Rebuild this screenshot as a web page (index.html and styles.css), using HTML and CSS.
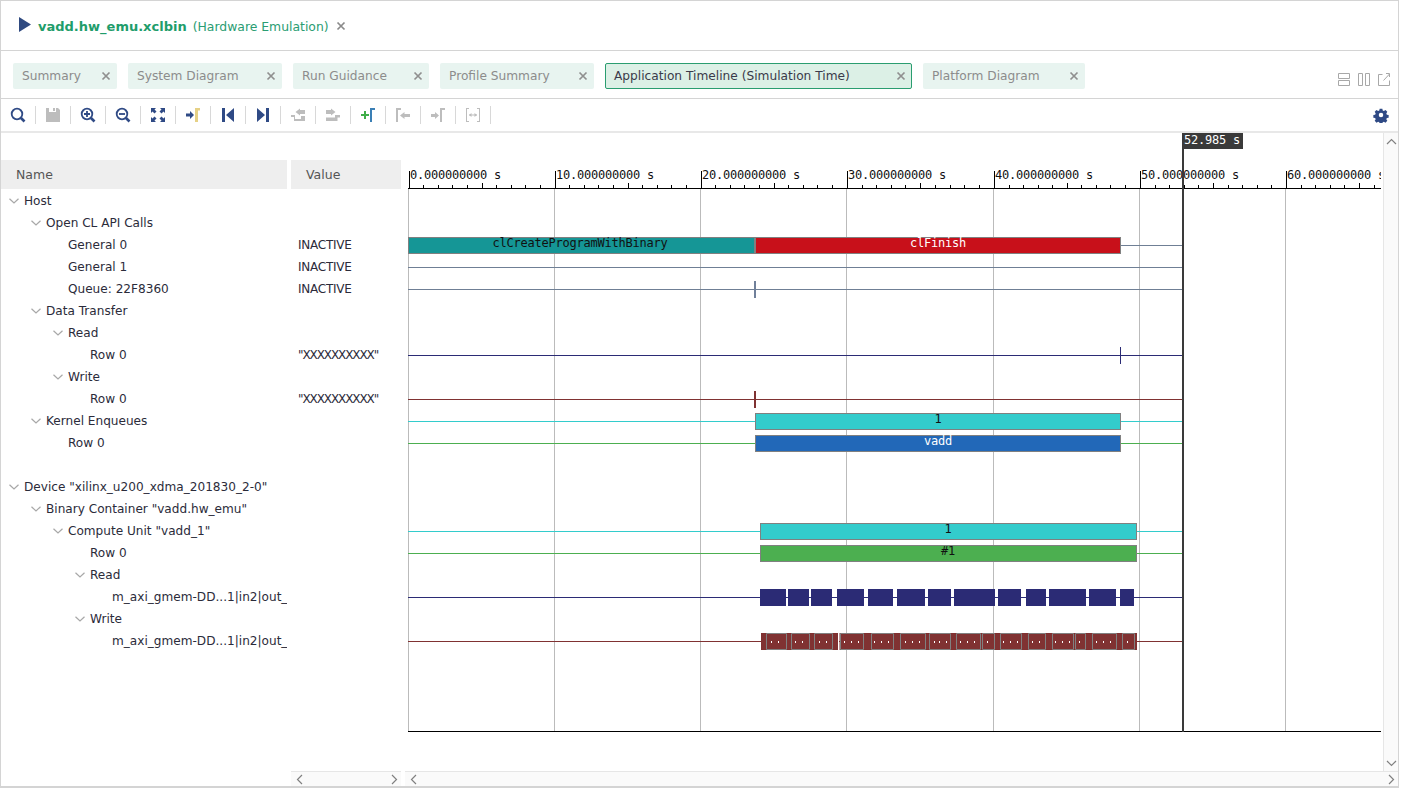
FILE: index.html
```html
<!DOCTYPE html>
<html lang="en">
<head>
<meta charset="utf-8">
<title>Application Timeline</title>
<link rel="stylesheet" href="styles.css">
</head>
<body>
<svg class="defs" width="0" height="0" aria-hidden="true">
  <symbol id="x" viewBox="0 0 10 10"><path d="M1.500 1.500l7 7M8.500 1.500l-7 7" fill="none" stroke="currentColor" stroke-width="1.700"/></symbol>
  <symbol id="chev" viewBox="0 0 10 6"><path d="M.5.7L5 5l4.500-4.300" fill="none" stroke="#a8a8a8" stroke-width="1.200"/></symbol>
</svg>
<div class="app">
  <header class="title">
    <svg class="play" width="12" height="15" viewBox="0 0 12 15"><path d="M0 0l12 7.500L0 15z"/></svg>
    <span class="file">vadd.hw_emu.xclbin</span>
    <span class="mode">(Hardware Emulation)</span>
    <svg class="tx" width="10" height="10"><use href="#x"/></svg>
  </header>

  <nav class="tabs">
    <div class="tab w104">Summary<svg class="cx" width="10" height="10"><use href="#x"/></svg></div>
    <div class="tab w154">System Diagram<svg class="cx" width="10" height="10"><use href="#x"/></svg></div>
    <div class="tab w136">Run Guidance<svg class="cx" width="10" height="10"><use href="#x"/></svg></div>
    <div class="tab w154">Profile Summary<svg class="cx" width="10" height="10"><use href="#x"/></svg></div>
    <div class="tab active w307">Application Timeline (Simulation Time)<svg class="cx" width="10" height="10"><use href="#x"/></svg></div>
    <div class="tab w162">Platform Diagram<svg class="cx" width="10" height="10"><use href="#x"/></svg></div>
    <div class="views">
      <svg width="12" height="13" viewBox="0 0 12 13"><path d="M.5.5h11v5H.5zM.5 7.500h11v5H.5z"/></svg>
      <svg width="12" height="13" viewBox="0 0 12 13"><path d="M.5.5h4v12h-4zM7.500.5h4v12h-4z"/></svg>
      <svg width="12" height="13" viewBox="0 0 12 13"><path d="M4.500 1.500h-4v11h11v-5M5.500 7.500l6-6.500M8 .5h3.500V4"/></svg>
    </div>
  </nav>

  <div class="toolbar">
    <div class="tool"><svg width="16" height="16" viewBox="0 0 16 16"><circle cx="7" cy="7" r="5.300" class="ring"/><path class="ring thick" d="M11 11l3.500 3.500"/></svg></div>
    <div class="tool"><svg width="16" height="16" viewBox="0 0 16 16"><path class="off" d="M1 1h3v4h7V1h2l2 2v12H1z"/><path class="off" d="M8 1h2v3H8z"/></svg></div>
    <div class="tool"><svg width="16" height="16" viewBox="0 0 16 16"><circle cx="7" cy="7" r="5.300" class="ring"/><path class="ring thick" d="M11 11l3.500 3.500"/><path class="ring" d="M4 7h6M7 4v6"/></svg></div>
    <div class="tool"><svg width="16" height="16" viewBox="0 0 16 16"><circle cx="7" cy="7" r="5.300" class="ring"/><path class="ring thick" d="M11 11l3.500 3.500"/><path class="ring" d="M4 7h6"/></svg></div>
    <div class="tool"><svg width="16" height="16" viewBox="0 0 16 16"><path class="on" d="M1 1h5L4.500 2.500 6.500 4.500 4.500 6.500 2.500 4.500 1 6zM15 1v5L13.500 4.500 11.500 6.500 9.500 4.500 11.500 2.500 10 1zM1 15v-5L2.500 11.500 4.500 9.500 6.500 11.500 4.500 13.500 6 15zM15 15h-5L11.500 13.500 9.500 11.500 11.500 9.500 13.500 11.500 15 10z"/></svg></div>
    <div class="tool"><svg width="16" height="16" viewBox="0 0 16 16"><path class="on" d="M1 6.500h4V4l4 4-4 4V9.500H1z"/><path class="yel" d="M10 15V1h5v2.500h-2V15z"/></svg></div>
    <div class="tool"><svg width="16" height="16" viewBox="0 0 16 16"><path class="on" d="M2 1h3v14H2zM14 1v14L6 8z"/></svg></div>
    <div class="tool"><svg width="16" height="16" viewBox="0 0 16 16"><path class="on" d="M2 1v14l8-7zM11 1h3v14h-3z"/></svg></div>
    <div class="tool"><svg width="16" height="16" viewBox="0 0 16 16"><path class="off" d="M1 8h4v4h6V9h4v5H4v-4H1zM5.500 5L10 1.500V3h5v4h-5v1.500z"/></svg></div>
    <div class="tool"><svg width="16" height="16" viewBox="0 0 16 16"><path class="off" d="M1 3h5V1.500L10.500 5 6 8.500V7H1zM1 10.500h9V8h5v2.500h-2.500V14H1z"/></svg></div>
    <div class="tool"><svg width="16" height="16" viewBox="0 0 16 16"><path class="grn" d="M1 7h3V4h2v3h3v2H6v3H4V9H1z"/><path class="blu" d="M10 15V1h5v2h-3v12z"/></svg></div>
    <div class="tool"><svg width="16" height="16" viewBox="0 0 16 16"><path class="off" d="M1 15V1h5v2H3v12zM5 8.500l4.500-3.500v2H15v3H9.500v2z"/></svg></div>
    <div class="tool"><svg width="16" height="16" viewBox="0 0 16 16"><path class="off" d="M1 7h4V5l4 3.500L5 12v-2H1zM10 15V1h5v2h-3v12z"/></svg></div>
    <div class="tool"><svg width="16" height="16" viewBox="0 0 16 16"><path class="off" d="M1 1h3v1H2v12h2v1H1zM15 1h-3v1h2v12h-2v1h3zM4 7.500h8v1H4z"/><path class="off" d="M4 8l2.500-2v4zM12 8l-2.500-2v4z"/></svg></div>
    <div class="tool-end"><svg width="16" height="16" viewBox="0 0 16 16"><path class="on" fill-rule="evenodd" d="M6.500 1h3l.4 2 1.300.6 1.800-1.100 2 2-1.100 1.800.6 1.300 2 .4v3l-2 .4-.6 1.300 1.100 1.800-2 2-1.800-1.100-1.300.6-.4 2h-3l-.4-2-1.300-.6-1.800 1.100-2-2 1.100-1.800-.6-1.300-2-.4v-3l2-.4.6-1.300-1.100-1.800 2-2 1.800 1.100 1.300-.6zM8 5.500a2.500 2.500 0 1 0 0 5 2.500 2.500 0 0 0 0-5z" transform="translate(0.800 0.800) scale(0.9)"/></svg></div>
  </div>

  <main class="body">
    <section class="side">
      <div class="heads"><div class="head name">Name</div><div class="head value">Value</div></div>
      <div class="rows">
        <div class="row l0"><svg class="chev" width="10" height="6"><use href="#chev"/></svg><span class="nm">Host</span></div>
        <div class="row l1"><svg class="chev" width="10" height="6"><use href="#chev"/></svg><span class="nm">Open CL API Calls</span></div>
        <div class="row l2"><span class="nm">General 0</span><span class="val">INACTIVE</span></div>
        <div class="row l2"><span class="nm">General 1</span><span class="val">INACTIVE</span></div>
        <div class="row l2"><span class="nm">Queue: 22F8360</span><span class="val">INACTIVE</span></div>
        <div class="row l1"><svg class="chev" width="10" height="6"><use href="#chev"/></svg><span class="nm">Data Transfer</span></div>
        <div class="row l2"><svg class="chev" width="10" height="6"><use href="#chev"/></svg><span class="nm">Read</span></div>
        <div class="row l3"><span class="nm">Row 0</span><span class="val xs">"XXXXXXXXXX"</span></div>
        <div class="row l2"><svg class="chev" width="10" height="6"><use href="#chev"/></svg><span class="nm">Write</span></div>
        <div class="row l3"><span class="nm">Row 0</span><span class="val xs">"XXXXXXXXXX"</span></div>
        <div class="row l1"><svg class="chev" width="10" height="6"><use href="#chev"/></svg><span class="nm">Kernel Enqueues</span></div>
        <div class="row l2"><span class="nm">Row 0</span></div>
        <div class="row"></div>
        <div class="row l0"><svg class="chev" width="10" height="6"><use href="#chev"/></svg><span class="nm">Device "xilinx_u200_xdma_201830_2-0"</span></div>
        <div class="row l1"><svg class="chev" width="10" height="6"><use href="#chev"/></svg><span class="nm">Binary Container "vadd.hw_emu"</span></div>
        <div class="row l2"><svg class="chev" width="10" height="6"><use href="#chev"/></svg><span class="nm">Compute Unit "vadd_1"</span></div>
        <div class="row l3"><span class="nm">Row 0</span></div>
        <div class="row l3"><svg class="chev" width="10" height="6"><use href="#chev"/></svg><span class="nm">Read</span></div>
        <div class="row l4"><span class="nm">m_axi_gmem-DD...1|in2|out_r</span></div>
        <div class="row l3"><svg class="chev" width="10" height="6"><use href="#chev"/></svg><span class="nm">Write</span></div>
        <div class="row l4"><span class="nm">m_axi_gmem-DD...1|in2|out_r</span></div>
      </div>
      <div class="side-foot">
        <div class="hbar short">
          <svg width="7" height="11" viewBox="0 0 7 11"><path class="arr" d="M6 1L1.500 5.500 6 10"/></svg>
          <svg width="7" height="11" viewBox="0 0 7 11"><path class="arr" d="M1 1l4.500 4.500L1 10"/></svg>
        </div>
      </div>
    </section>

    <section class="wave">
      <div class="wave-main">
        <svg class="canvas" width="976" height="638" viewBox="405 133 976 638">
          <!-- grid -->
          <path class="grid" d="M408.500 189V731M554.500 189V731M700.500 189V731M846.500 189V731M993.500 189V731M1139.500 189V731M1285.500 189V731"/>
          <!-- ruler -->
          <path class="rule" d="M408 188.500H1381M409.500 171V189M555.500 171V189M701.500 171V189M847.500 171V189M994.500 171V189M1140.500 171V189M1286.500 171V189"/>
          <path class="rule" d="M423.500 185v3M438.500 185v3M452.500 185v3M467.500 185v3M482.500 183v5M496.500 185v3M511.500 185v3M525.500 185v3M540.500 185v3M569.500 185v3M584.500 185v3M598.500 185v3M613.500 185v3M628.500 183v5M642.500 185v3M657.500 185v3M671.500 185v3M686.500 185v3M715.500 185v3M730.500 185v3M744.500 185v3M759.500 185v3M774.500 183v5M788.500 185v3M803.500 185v3M817.500 185v3M832.500 185v3M862.500 185v3M876.500 185v3M891.500 185v3M905.500 185v3M920.500 183v5M935.500 185v3M950.500 185v3M964.500 185v3M979.500 185v3M1009.500 185v3M1023.500 185v3M1038.500 185v3M1052.500 185v3M1067.500 183v5M1081.500 185v3M1096.500 185v3M1110.500 185v3M1125.500 185v3M1155.500 185v3M1169.500 185v3M1184.500 185v3M1198.500 185v3M1213.500 183v5M1228.500 185v3M1242.500 185v3M1257.500 185v3M1271.500 185v3M1301.500 185v3M1315.500 185v3M1330.500 185v3M1344.500 185v3M1359.500 183v5M1374.500 185v3"/>
          <text class="mono" x="410" y="179">0.000000000 s</text>
          <text class="mono" x="556" y="179">10.000000000 s</text>
          <text class="mono" x="702" y="179">20.000000000 s</text>
          <text class="mono" x="848" y="179">30.000000000 s</text>
          <text class="mono" x="995" y="179">40.000000000 s</text>
          <text class="mono" x="1141" y="179">50.000000000 s</text>
          <text class="mono" x="1287" y="179">60.000000000 s</text>

          <!-- signal lines -->
          <path class="sig" d="M1121 245.500H1182M408 267.500H1182M408 289.500H1182"/>
          <path class="sig-cyan" d="M408 421.500H755M1121 421.500H1182M408 531.500H760M1137 531.500H1182"/>
          <path class="sig-green" d="M408 443.500H755M1121 443.500H1182M408 553.500H760M1137 553.500H1182"/>
          <path class="navy" d="M408 355.500H1182M408 597.500H1182"/>
          <path class="maroon" d="M408 399.500H1182M408 641.500H1182"/>
          <rect class="sig-tick" x="754" y="281" width="2" height="17"/>
          <rect class="navy-tick" x="1120" y="347" width="1" height="17"/>
          <rect class="red-tick" x="754" y="391" width="2" height="17"/>

          <!-- bars -->
          <rect class="b-teal" x="408.500" y="237.500" width="346" height="16"/>
          <rect class="b-red" x="755.500" y="237.500" width="365" height="16"/>
          <rect class="b-cyan" x="755.500" y="413.500" width="365" height="16"/>
          <rect class="b-blue" x="755.500" y="435.500" width="365" height="16"/>
          <rect class="b-cyan" x="760.500" y="523.500" width="376" height="16"/>
          <rect class="b-green" x="760.500" y="545.500" width="376" height="16"/>
          <text class="mono mid" x="580" y="247">clCreateProgramWithBinary</text>
          <text class="mono mid white" x="938" y="247">clFinish</text>
          <text class="mono mid" x="938" y="423">1</text>
          <text class="mono mid white" x="938" y="445">vadd</text>
          <text class="mono mid" x="948" y="533">1</text>
          <text class="mono mid" x="948" y="555">#1</text>

          <!-- read blocks -->
          <path class="f-navy" d="M760 589h26v17h-26zM788 589h21v17h-21zM811 589h21v17h-21zM837 589h27v17h-27zM868 589h25v17h-25zM897 589h28v17h-28zM928 589h23v17h-23zM954 589h41v17h-41zM998 589h23v17h-23zM1026 589h20v17h-20zM1049 589h37v17h-37zM1089 589h27v17h-27zM1120 589h14v17h-14z"/>

          <!-- write blocks -->
          <path class="f-maroon" d="M761 633h77v17h-77zM839.500 633h297.500v17h-297.500z"/>
          <path class="out" d="M766.500 633.500h20v16h-20zM791.500 633.500h18v16h-18zM814.500 633.500h18v16h-18zM840.500 633.500h23v16h-23zM871.500 633.500h22v16h-22zM900.500 633.500h25v16h-25zM929.500 633.500h21v16h-21zM956.500 633.500h24v16h-24zM982.500 633.500h12v16h-12zM1000.500 633.500h21v16h-21zM1028.500 633.500h17v16h-17zM1052.500 633.500h21v16h-21zM1075.500 633.500h10v16h-10zM1092.500 633.500h24v16h-24zM1122.500 633.500h12v16h-12z"/>
          <path class="dots" d="M771 641h1v2h-1zM778 641h1v2h-1zM795 641h1v2h-1zM802 641h1v2h-1zM819 641h1v2h-1zM826 641h1v2h-1zM838 641h1v2h-1zM844 641h1v2h-1zM851 641h1v2h-1zM858 641h1v2h-1zM874 641h1v2h-1zM881 641h1v2h-1zM888 641h1v2h-1zM905 641h1v2h-1zM912 641h1v2h-1zM919 641h1v2h-1zM934 641h1v2h-1zM939 641h1v2h-1zM946 641h1v2h-1zM960 641h1v2h-1zM967 641h1v2h-1zM974 641h1v2h-1zM987 641h1v2h-1zM1003 641h1v2h-1zM1010 641h1v2h-1zM1017 641h1v2h-1zM1032 641h1v2h-1zM1039 641h1v2h-1zM1055 641h1v2h-1zM1062 641h1v2h-1zM1069 641h1v2h-1zM1079 641h1v2h-1zM1096 641h1v2h-1zM1103 641h1v2h-1zM1110 641h1v2h-1zM1127 641h1v2h-1z"/>

          <!-- bottom -->
          <rect class="f-black" x="408" y="731" width="973" height="1"/>
          <!-- cursor -->
          <rect class="f-cursor" x="1182" y="133" width="2" height="599"/>
          <rect class="f-cursor" x="1182" y="133" width="61" height="16"/>
          <text class="mono white" x="1184" y="144">52.985 s</text>
        </svg>
        <div class="vbar">
          <svg width="11" height="7" viewBox="0 0 11 7"><path class="arr" d="M1 6l4.500-4.500L10 6"/></svg>
          <svg width="11" height="7" viewBox="0 0 11 7"><path class="arr" d="M1 1l4.500 4.500L10 1"/></svg>
        </div>
      </div>
      <div class="hbar long">
        <svg width="7" height="11" viewBox="0 0 7 11"><path class="arr" d="M6 1L1.500 5.500 6 10"/></svg>
        <svg width="7" height="11" viewBox="0 0 7 11"><path class="arr" d="M1 1l4.500 4.500L1 10"/></svg>
      </div>
    </section>
  </main>
</div>
</body>
</html>
```

FILE: styles.css
```css
* { box-sizing: border-box; }
html, body { margin: 0; padding: 0; background: #fff; overflow: hidden; }
body { width: 1402px; height: 788px; font-family: "DejaVu Sans", sans-serif; font-size: 12px; color: #2b2b3a; }
.defs { position: absolute; }
svg { display: block; flex: none; }

.app { width: 1399px; height: 788px; border: 1px solid #d4d4d4; border-bottom-width: 2px; display: flex; flex-direction: column; }

.title { height: 49px; display: flex; align-items: center; flex: none; padding: 2px 0 0 18px; }
.play { fill: #2f4a80; margin-right: 7px; margin-top: -5px; }
.file { font-weight: 700; font-size: 13px; color: #1f9d6b; margin-right: 6px; }
.mode { font-size: 12.4px; color: #2a9d72; margin-right: 7px; }
.tx { color: #8a8a8a; margin-top: -1px; }

.tabs { height: 49px; flex: none; display: flex; align-items: center; gap: 11px; padding: 3px 0 0 12px; border-top: 1px solid #d4d4d4; border-bottom: 1px solid #d4d4d4; }
.tab { height: 26px; display: flex; align-items: center; justify-content: space-between; padding: 0 6px 0 9px; background: #e8f4f0; border-radius: 2px; color: #8c8c8c; font-size: 12.2px; flex: none; }
.tab.active { background: #dcf0e6; border: 1px solid #2a9d70; color: #3a3a4a; padding: 0 5px 0 8px; }
.cx { color: #8f8f8f; }
.w104 { width: 104px; }
.w136 { width: 136px; }
.w154 { width: 154px; }
.w162 { width: 162px; }
.w307 { width: 307px; }
.views { margin-left: auto; display: flex; gap: 8px; padding-right: 8px; align-self: flex-start; margin-top: 19px; }
.views svg { fill: none; stroke: #a8a8a8; }

.toolbar { height: 34px; flex: none; display: flex; align-items: center; border-bottom: 2px solid #e8e8e8; }
.tool { width: 35px; height: 18px; flex: none; display: flex; align-items: center; justify-content: center; border-right: 1px solid #d8d8d8; }
.tool-end { margin-left: auto; margin-right: 9px; }
.ring { fill: none; stroke: #2f4a85; stroke-width: 1.8; }
.ring.thick { stroke-width: 2.6; }
.on { fill: #2f4a85; }
.off { fill: #bdbdbd; }
.yel { fill: #e6d186; }
.grn { fill: #3fae49; }
.blu { fill: #3a7fb5; }

.body { flex: 1; min-height: 0; display: flex; }

.side { width: 404px; flex: none; display: flex; flex-direction: column; }
.heads { height: 29px; margin-top: 27px; display: flex; gap: 4px; flex: none; }
.head { background: #eeeeee; display: flex; align-items: center; color: #555; font-size: 12.5px; }
.head.name { width: 286px; padding-left: 15px; }
.head.value { width: 110px; padding-left: 15px; }
.rows { flex: 1; min-height: 0; padding-top: 1px; }
.row { height: 22px; position: relative; display: flex; align-items: center; }
.nm { width: 286px; overflow: hidden; white-space: nowrap; flex: none; font-size: 12.1px; color: #2b2b3a; }
.val { position: absolute; left: 297px; white-space: nowrap; font-size: 12px; letter-spacing: -0.25px; color: #2b2b3a; }
.val.xs { letter-spacing: -1.1px; }
.chev { position: absolute; top: 8px; }
.row .nm { padding-left: 23px; }
.l0 .chev { left: 8px; }
.row.l1 .nm { padding-left: 45px; }
.l1 .chev { left: 30px; }
.row.l2 .nm { padding-left: 67px; }
.l2 .chev { left: 52px; }
.row.l3 .nm { padding-left: 89px; }
.l3 .chev { left: 74px; }
.row.l4 .nm { padding-left: 111px; }

.side-foot { height: 15px; flex: none; padding-left: 290px; }
.hbar { height: 15px; background: #fafafa; border-top: 1px solid #e6e6e6; display: flex; align-items: center; justify-content: space-between; padding: 0 3px 0 5px; flex: none; }
.hbar.short { width: 110px; }
.arr { fill: none; stroke: #808080; stroke-width: 1.2; }

.wave { flex: 1; min-width: 0; display: flex; flex-direction: column; }
.wave-main { flex: 1; min-height: 0; display: flex; }
.canvas { flex: none; }
.vbar { width: 15px; margin-left: 2px; background: #fafafa; border-left: 1px solid #e6e6e6; display: flex; flex-direction: column; justify-content: space-between; align-items: center; padding: 5px 0 4px; }

.grid { fill: none; stroke: #bbbbbb; stroke-width: 1; }
.rule { fill: none; stroke: #000; stroke-width: 1; }
.mono { font-family: "DejaVu Sans Mono", monospace; font-size: 12px; letter-spacing: -0.22px; fill: #111; }
.mid { text-anchor: middle; }
.white { fill: #fff; }
.sig { fill: none; stroke: #6f7f95; stroke-width: 1; }
.sig-cyan { fill: none; stroke: #33cccc; stroke-width: 1; }
.sig-green { fill: none; stroke: #4caf50; stroke-width: 1; }
.navy { fill: none; stroke: #2b2b75; stroke-width: 1; }
.maroon { fill: none; stroke: #803232; stroke-width: 1; }
.sig-tick { fill: #70809a; }
.navy-tick { fill: #2b2b75; }
.red-tick { fill: #803232; }
.b-teal { fill: #159696; stroke: #808080; }
.b-red { fill: #c8101a; stroke: #808080; }
.b-cyan { fill: #33cccc; stroke: #808080; }
.b-blue { fill: #2268b8; stroke: #808080; }
.b-green { fill: #4caf50; stroke: #808080; }
.f-navy { fill: #2b2b75; }
.f-maroon { fill: #803232; }
.out { fill: none; stroke: #808080; }
.dots { fill: #fff; }
.f-black { fill: #000; }
.f-cursor { fill: #3a3a3a; }
```
